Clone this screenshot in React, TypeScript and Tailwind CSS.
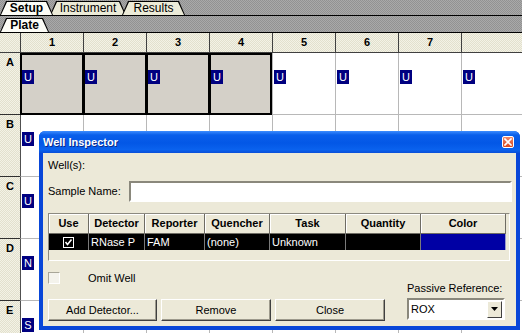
import React from 'react';

const dither = 'bg-[repeating-conic-gradient(#a9a9a9_0_25%,#929292_0_50%)] bg-[length:2px_2px]';
const beigeDots = 'bg-[repeating-conic-gradient(#f3f2e6_0_25%,#e2e0cd_0_50%)] bg-[length:2px_2px]';
const tabClip = '[clip-path:polygon(0_100%,6px_0,calc(100%_-_6px)_0,100%_100%)]';

const cols = ['1', '2', '3', '4', '5', '6', '7', ''];
// badges only where the inspector window does not cover them
const rows = [
  { label: 'A', badge: 'U', shown: 8, selected: [0, 1, 2, 3] },
  { label: 'B', badge: 'U', shown: 1, selected: [] as number[] },
  { label: 'C', badge: 'U', shown: 1, selected: [] as number[] },
  { label: 'D', badge: 'N', shown: 1, selected: [] as number[] },
  { label: 'E', badge: 'S', shown: 1, selected: [] as number[] },
];

const tableCols = [
  { name: 'Use', w: 'w-[40px]' },
  { name: 'Detector', w: 'w-[56px]' },
  { name: 'Reporter', w: 'w-[60px]' },
  { name: 'Quencher', w: 'w-[65px]' },
  { name: 'Task', w: 'w-[76px]' },
  { name: 'Quantity', w: 'w-[75px]' },
  { name: 'Color', w: 'w-[85px]' },
];

function Tab({ label, active, className = '' }: { label: string; active?: boolean; className?: string }) {
  return (
    <div className={`h-[14px] bg-black px-px pt-px ${tabClip} ${className}`}>
      <div
        className={`flex h-full items-center justify-center px-[10px] text-[12px] leading-[13px] text-black ${tabClip} ${
          active ? 'bg-[#fcfcf6] font-bold' : 'bg-[#ecebd8]'
        }`}
      >
        {label}
      </div>
    </div>
  );
}

function Badge({ letter, className = '' }: { letter: string; className?: string }) {
  return (
    <span
      className={`flex h-[14px] w-[12px] items-center justify-center bg-[#000080] text-[11px] leading-none text-white ${className}`}
    >
      {letter}
    </span>
  );
}

function Button({ label, w }: { label: string; w: string }) {
  return (
    <button
      className={`${w} flex h-[22px] items-center justify-center border border-b-[#404040] border-l-white border-r-[#404040] border-t-white bg-[#ece9d8] text-[11px] text-black shadow-[inset_-1px_-1px_0_#9d9a8c]`}
    >
      {label}
    </button>
  );
}

function WellInspector() {
  return (
    <div className="absolute left-[39px] top-[131px] flex h-[199px] w-[481px] flex-col overflow-hidden rounded-t-[6px] bg-[#0846d8]">
      {/* Title bar */}
      <div className="flex h-[22px] shrink-0 items-center justify-between bg-[linear-gradient(180deg,#3d8dff_0%,#0a5fea_18%,#0357e6_55%,#0a62ee_85%,#0a4fd8_100%)] pl-[4px] pr-[6px]">
        <span className="text-[11px] font-bold text-white [text-shadow:1px_1px_0_#0a2a8a]">Well Inspector</span>
        <span className="flex h-[12px] w-[12px] items-center justify-center rounded-[2px] border border-white bg-[linear-gradient(180deg,#f0886a,#d8481e)]">
          <svg width="8" height="8" viewBox="0 0 8 8">
            <path d="M1 1 L7 7 M7 1 L1 7" stroke="white" strokeWidth="1.6" strokeLinecap="square" />
          </svg>
        </span>
      </div>

      {/* Body */}
      <div className="ml-[4px] mr-[4px] flex flex-1 flex-col bg-[#ece9d8] pl-[5px] pr-[4px] pt-[6px] text-[11px] text-black">
        <div className="h-[13px] leading-[13px]">Well(s):</div>

        <div className="mt-[9px] flex h-[21px] items-center">
          <span className="w-[81px]">Sample Name:</span>
          <div className="h-full flex-1 border-2 border-[#8a887c] border-b-white border-r-white bg-white" />
        </div>

        {/* Detector table */}
        <div className="mt-[11px] h-[48px] w-[462px] border border-[#8c8a80] border-b-white border-r-white bg-[#ece9d8]">
          <div className="flex h-[20px]">
            {tableCols.map((c) => (
              <div
                key={c.name}
                className={`${c.w} flex items-center justify-center border-b border-r border-[#6e6c64] font-bold shadow-[inset_1px_1px_0_#fff]`}
              >
                {c.name}
              </div>
            ))}
          </div>
          <div className="flex h-[16px] text-white">
            <div className="flex w-[40px] items-center justify-center border-r border-[#7a7a7a] bg-black">
              <span className="flex h-[11px] w-[11px] items-center justify-center border border-white">
                <svg width="9" height="9" viewBox="0 0 9 9">
                  <path d="M1.5 4 L3.5 6.5 L7.5 1.5" stroke="white" strokeWidth="1.6" fill="none" />
                </svg>
              </span>
            </div>
            <div className="flex w-[56px] items-center border-r border-[#7a7a7a] bg-black pl-[2px]">RNase P</div>
            <div className="flex w-[60px] items-center border-r border-[#7a7a7a] bg-black pl-[2px]">FAM</div>
            <div className="flex w-[65px] items-center border-r border-[#7a7a7a] bg-black pl-[2px]">(none)</div>
            <div className="flex w-[76px] items-center border-r border-[#7a7a7a] bg-black pl-[2px]">Unknown</div>
            <div className="w-[75px] border-r border-[#7a7a7a] bg-black" />
            <div className="w-[85px] border-r border-[#9a9acc] bg-[#0000a4]" />
          </div>
        </div>

        {/* Bottom controls */}
        <div className="flex">
          <div className="flex flex-col">
            <div className="mt-[11px] flex h-[12px] items-center">
              <span className="h-[12px] w-[12px] border border-[#a8a698] border-b-white border-r-white bg-[#f4f3ec]" />
              <span className="ml-[28px]">Omit Well</span>
            </div>
            <div className="mt-[15px] flex gap-[4px]">
              <Button label="Add Detector..." w="w-[109px]" />
              <Button label="Remove" w="w-[110px]" />
              <Button label="Close" w="w-[110px]" />
            </div>
          </div>
          <div className="ml-[22px] flex flex-col">
            <span className="mt-[21px] h-[13px] leading-[13px]">Passive Reference:</span>
            <div className="mt-[3px] flex h-[22px] w-[98px] items-center justify-between border-2 border-[#8a887c] border-b-white border-r-white bg-white pl-[2px] pr-px">
              <span>ROX</span>
              <span className="flex h-[17px] w-[15px] items-center justify-center border border-b-[#404040] border-l-white border-r-[#404040] border-t-white bg-[#ece9d8]">
                <svg width="7" height="4" viewBox="0 0 7 4">
                  <path d="M0 0 H7 L3.5 4 Z" fill="black" />
                </svg>
              </span>
            </div>
          </div>
        </div>
      </div>
      <div className="h-[4px] shrink-0" />
    </div>
  );
}

export default function App() {
  return (
    <div className="relative h-[333px] w-[522px] overflow-hidden bg-white font-['Liberation_Sans',Arial,sans-serif] text-black">
      {/* Top tab strip */}
      <div className={`flex h-[16px] items-end border-b border-black ${dither}`}>
        <Tab label="Setup" active className="relative z-20 w-[53px]" />
        <Tab label="Instrument" className="relative z-0 -ml-[3px] w-[76px]" />
        <Tab label="Results" className="relative z-10 -ml-[4px] w-[63px]" />
      </div>
      <div className={`flex h-[17px] items-end border-b border-black ${dither}`}>
        <Tab label="Plate" active className="w-[49px]" />
      </div>

      {/* Plate grid */}
      <div className="grid grid-cols-[20px_repeat(8,63px)] grid-rows-[20px_repeat(5,62px)] text-[11px]">
        <div className={`border-b border-[#404040] ${beigeDots}`} />
        {cols.map((c, i) => (
          <div
            key={i}
            className={`flex items-center justify-center border-b border-l border-[#404040] font-bold ${beigeDots}`}
          >
            {c}
          </div>
        ))}
        {rows.map((r) => (
          <React.Fragment key={r.label}>
            <div className={`border-b border-[#303030] pl-[6px] pt-[3px] font-bold leading-[13px] ${beigeDots}`}>{r.label}</div>
            {cols.map((_, i) => {
              const sel = r.selected.includes(i);
              const last = sel && !r.selected.includes(i + 1);
              if (sel) {
                return (
                  <div
                    key={i}
                    className={`flex border-y-2 border-l-2 border-black bg-[#d4d0c8] ${last ? 'border-r-2' : 'border-r'}`}
                  >
                    <Badge letter={r.badge} className="mt-[15px]" />
                  </div>
                );
              }
              return (
                <div
                  key={i}
                  className={`flex border-b border-l bg-white ${i === 0 ? 'border-l-[#505050] border-b-[#b8b8b8]' : 'border-[#b8b8b8]'}`}
                >
                  {i < r.shown && <Badge letter={r.badge} className="ml-px mt-[17px]" />}
                </div>
              );
            })}
          </React.Fragment>
        ))}
      </div>

      <WellInspector />
    </div>
  );
}
